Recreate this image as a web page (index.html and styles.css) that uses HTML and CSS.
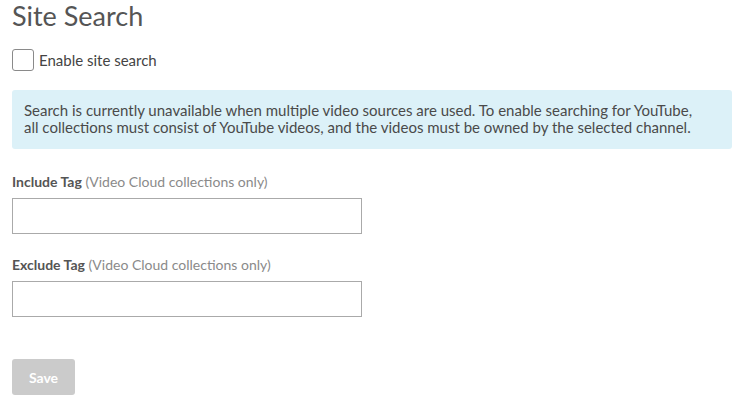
FILE: index.html
```html
<!DOCTYPE html>
<html>
<head>
<meta charset="utf-8">
<link rel="stylesheet" href="styles.css">
</head>
<body>
<div class="page">
  <h1 class="title">Site Search</h1>
  <label class="check-row">
    <span class="checkbox"></span>
    <span class="check-label">Enable site search</span>
  </label>
  <div class="alert">Search is currently unavailable when multiple video sources are used. To enable searching for YouTube, all collections must consist of YouTube videos, and the videos must be owned by the selected channel.</div>
  <div class="field">
    <div class="label"><b>Include Tag</b> <span class="hint">(Video Cloud collections only)</span></div>
    <div class="input"></div>
  </div>
  <div class="field">
    <div class="label"><b>Exclude Tag</b> <span class="hint">(Video Cloud collections only)</span></div>
    <div class="input"></div>
  </div>
  <button class="save">Save</button>
</div>
</body>
</html>
```
FILE: styles.css
```css
html, body { margin: 0; padding: 0; background: #fff; }
body { font-family: Lato, "Open Sans", sans-serif; color: #444; }
.page { padding: 0 15px 0 12px; display: flex; flex-direction: column; align-items: flex-start; }
.title { font-size: 27px; font-weight: 400; margin: 0; line-height: 32px; color: #555; padding-top: 0; }
.check-row { display: flex; align-items: center; margin-top: 17px; gap: 5px; }
.checkbox { width: 20px; height: 20px; border: 1px solid #8a8a8a; border-radius: 3px; background: #fff; }
.check-label { font-size: 15px; color: #444; }
.alert { align-self: stretch; margin-top: 19px; background: #dcf1f8; border-radius: 3px; padding: 12px 30px 13px 12px; font-size: 15px; line-height: 17px; color: #4a4a4a; }
.field { margin-top: 24px; display: flex; flex-direction: column; }
.field + .field { margin-top: 22px; }
.label { font-size: 14px; line-height: 17px; color: #555; margin-bottom: 8px; }
.label b { font-weight: 700; color: #555; }
.hint { color: #8a8a8a; }
.input { width: 348px; height: 34px; border: 1px solid #aaa; }
.save { margin-top: 42px; width: 63px; height: 36px; border: 0; border-radius: 3px; background: #cbcbcb; color: #fff; font-family: Lato, sans-serif; font-weight: 700; font-size: 14px; padding: 0; }
```
